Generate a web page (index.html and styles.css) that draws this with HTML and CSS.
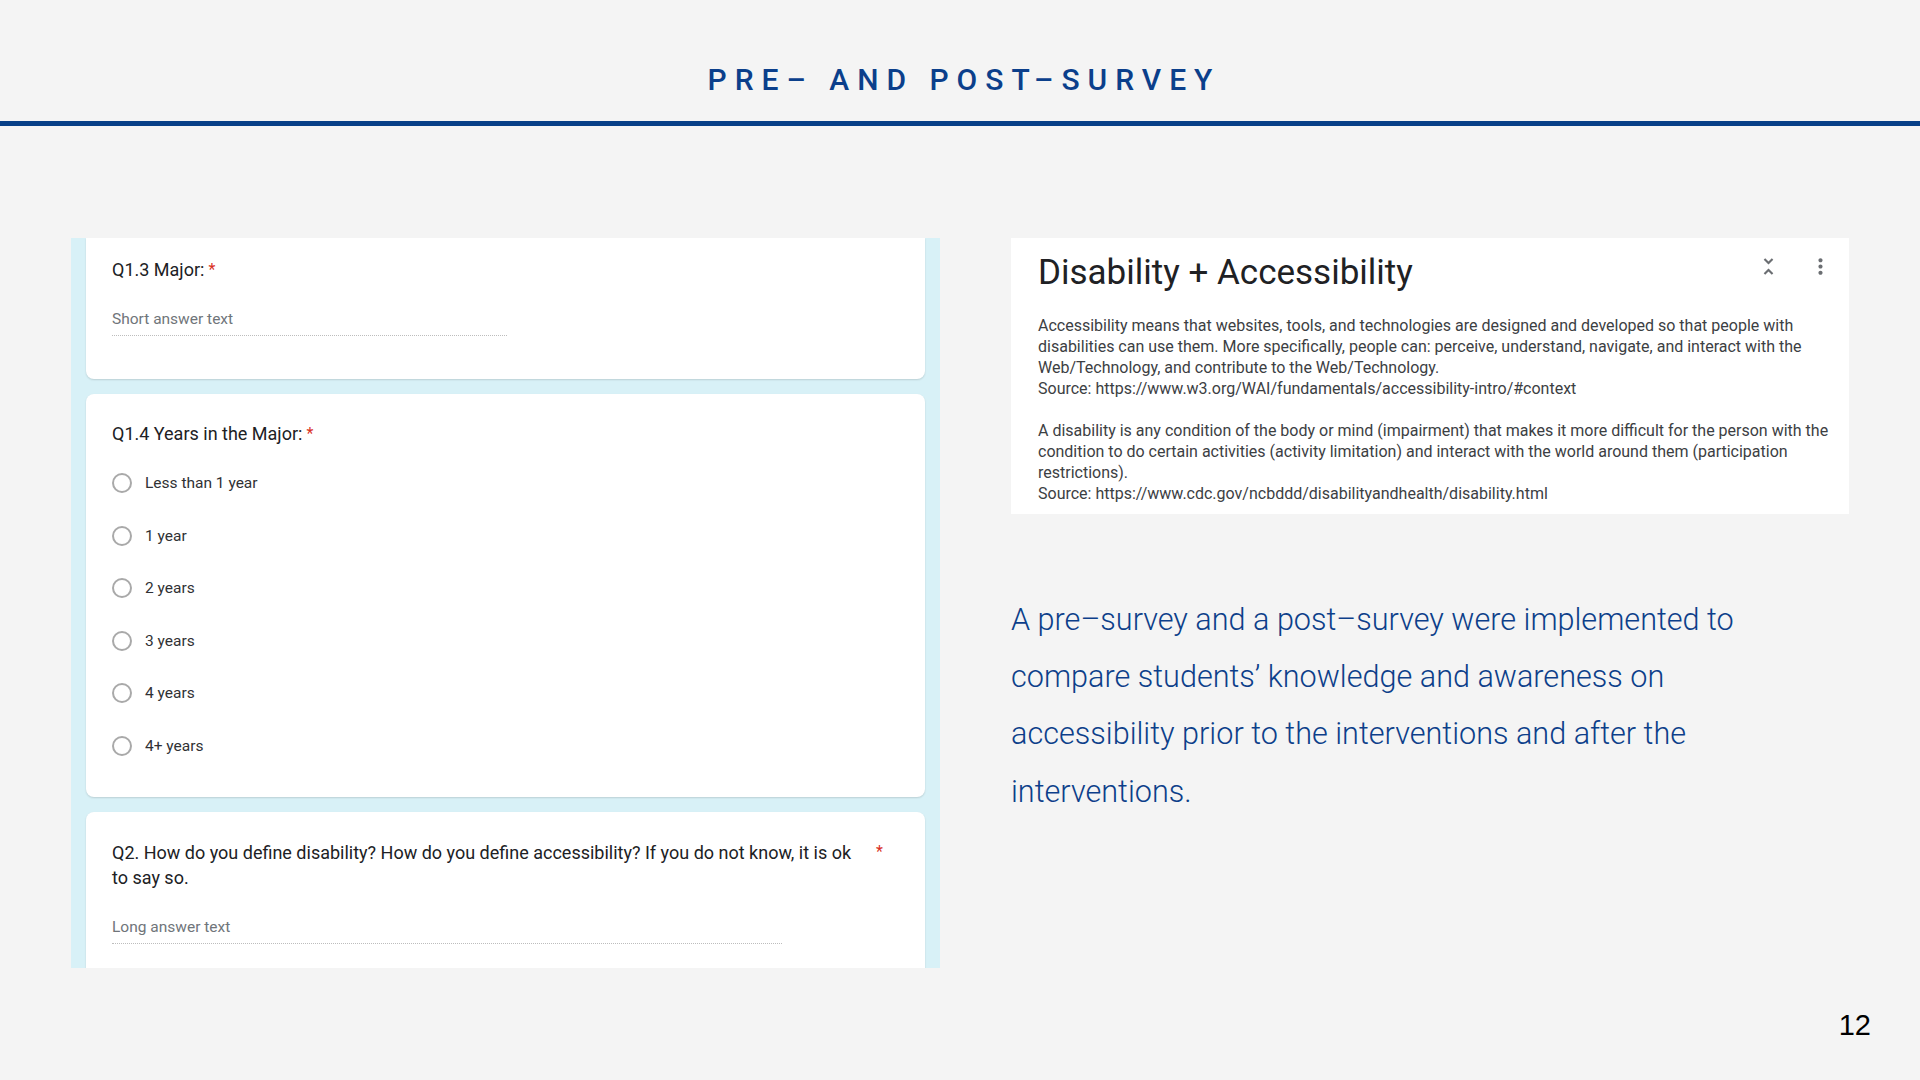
FILE: index.html
```html
<!DOCTYPE html>
<html lang="en">
<head>
<meta charset="utf-8">
<title>Pre- and Post-Survey</title>
<link rel="stylesheet" href="styles.css">
</head>
<body>
<header class="slide-header">
  <h1 class="slide-title">PRE– AND POST–SURVEY</h1>
</header>
<main class="slide-body">
  <section class="form-panel">
    <div class="form-card card-first">
      <div class="question"><span class="q-text">Q1.3 Major:</span><span class="req">*</span></div>
      <div class="answer short">Short answer text</div>
    </div>
    <div class="form-card card-radio">
      <div class="question"><span class="q-text">Q1.4 Years in the Major:</span><span class="req">*</span></div>
      <ul class="options">
        <li class="option"><span class="radio"></span><span class="opt-label">Less than 1 year</span></li>
        <li class="option"><span class="radio"></span><span class="opt-label">1 year</span></li>
        <li class="option"><span class="radio"></span><span class="opt-label">2 years</span></li>
        <li class="option"><span class="radio"></span><span class="opt-label">3 years</span></li>
        <li class="option"><span class="radio"></span><span class="opt-label">4 years</span></li>
        <li class="option"><span class="radio"></span><span class="opt-label">4+ years</span></li>
      </ul>
    </div>
    <div class="form-card card-long">
      <div class="question wide"><span class="q-text long">Q2. How do you define disability? How do you define accessibility? If you do not know, it is ok<br>to say so.</span><span class="req">*</span></div>
      <div class="answer long-answer">Long answer text</div>
    </div>
  </section>
  <section class="right-col">
    <div class="info-card">
      <div class="info-head">
        <h2 class="info-title">Disability + Accessibility</h2>
        <div class="info-icons">
          <svg class="icon" viewBox="0 0 24 24" width="25" height="25"><path fill="#6b6e72" d="M7.41 18.59L8.82 20 12 16.83 15.17 20l1.41-1.41L12 14l-4.590 4.59zm9.18-13.18L15.17 4 12 7.17 8.83 4 7.41 5.41 12 10l4.59-4.59z"/></svg>
          <svg class="icon" viewBox="0 0 24 24" width="25" height="25"><path fill="#6b6e72" d="M12 8c1.1 0 2-.9 2-2s-.9-2-2-2-2 .9-2 2 .9 2 2 2zm0 2c-1.1 0-2 .9-2 2s.9 2 2 2 2-.9 2-2-.9-2-2-2zm0 6c-1.1 0-2 .9-2 2s.9 2 2 2 2-.9 2-2-.9-2-2-2z"/></svg>
        </div>
      </div>
      <div class="info-text">
        <p>Accessibility means that websites, tools, and technologies are designed and developed so that people with<br>disabilities can use them. More specifically, people can: perceive, understand, navigate, and interact with the<br>Web/Technology, and contribute to the Web/Technology.<br>Source: https://www.w3.org/WAI/fundamentals/accessibility-intro/#context</p>
        <p>A disability is any condition of the body or mind (impairment) that makes it more difficult for the person with the<br>condition to do certain activities (activity limitation) and interact with the world around them (participation<br>restrictions).<br>Source: https://www.cdc.gov/ncbddd/disabilityandhealth/disability.html</p>
      </div>
    </div>
    <p class="summary">A pre–survey and a post–survey were implemented to<br>compare students’ knowledge and awareness on<br>accessibility prior to the interventions and after the<br>interventions.</p>
  </section>
</main>
<footer class="slide-footer"><span class="page-num">12</span></footer>
</body>
</html>
```
FILE: styles.css
```css
html, body {
  margin: 0;
  padding: 0;
}
body {
  width: 1920px;
  height: 1080px;
  overflow: hidden;
  background: #f4f4f4;
  font-family: Roboto, "Liberation Sans", sans-serif;
}

/* header */
.slide-header {
  height: 121px;
  border-bottom: 5px solid #073f87;
  display: flex;
  justify-content: center;
}
.slide-title {
  margin: 0 -8px 0 0;
  padding-top: 65px;
  font-family: Roboto, "Liberation Sans", sans-serif;
  font-weight: 500;
  font-size: 30px;
  line-height: 30px;
  letter-spacing: 8px;
  color: #0b3f8b;
}

/* main */
.slide-body {
  display: flex;
  gap: 71px;
  padding: 0 71px;
  margin-top: 112px;
  height: 730px;
}

/* form panel */
.form-panel {
  flex: none;
  width: 869px;
  box-sizing: border-box;
  padding: 0 15px;
  background: #d8f1f7;
  overflow: hidden;
  display: flex;
  flex-direction: column;
  gap: 15px;
}
.form-card {
  flex: none;
  background: #fff;
  border-radius: 8px;
  box-shadow: 0 1px 2px rgba(0, 0, 0, 0.14);
  padding: 0 26px;
  color: #202124;
}
.card-first {
  border-radius: 0 0 8px 8px;
  height: 141px;
  box-sizing: border-box;
  padding-top: 20px;
}
.card-radio {
  padding-top: 28px;
  padding-bottom: 25px;
}
.card-long {
  padding-top: 27.6px;
  padding-bottom: 40px;
}
.question {
  display: flex;
  align-items: flex-start;
  font-size: 18px;
  line-height: 24px;
}
.question.wide .q-text {
  width: 760px;
  line-height: 25.4px;
}
.req {
  color: #d93025;
  margin-left: 4px;
  font-size: 16px;
}
.answer {
  font-size: 15.5px;
  line-height: 20px;
  color: #70757a;
  padding-bottom: 6px;
  border-bottom: 1px dotted #bdbdbd;
}
.short {
  width: 395px;
  margin-top: 27px;
}
.long-answer {
  width: 670px;
  margin-top: 26.3px;
}
.options {
  list-style: none;
  margin: 10.7px 0 0;
  padding: 0;
}
.option {
  display: flex;
  align-items: center;
  height: 52.6px;
  gap: 13px;
}
.radio {
  width: 20px;
  height: 20px;
  box-sizing: border-box;
  border: 2px solid #a9a9a9;
  border-radius: 50%;
  flex: none;
}
.opt-label {
  font-size: 15.5px;
  color: #303134;
}

/* right column */
.right-col {
  flex: none;
  width: 838px;
  display: flex;
  flex-direction: column;
}
.info-card {
  background: #fff;
  padding: 14px 16.5px 10px 27px;
}
.info-head {
  display: flex;
  justify-content: space-between;
  align-items: flex-start;
}
.info-title {
  margin: 0;
  font-weight: 400;
  font-size: 35px;
  line-height: 42px;
  color: #202124;
}
.info-icons {
  display: flex;
  gap: 27px;
  margin-top: 1.5px;
}
.icon {
  display: block;
}
.info-text {
  margin-top: 21px;
  font-size: 16px;
  line-height: 21px;
  color: #3c4043;
  white-space: nowrap;
}
.info-text p {
  margin: 0;
}
.info-text p + p {
  margin-top: 21px;
}
.summary {
  margin: 77px 0 0;
  font-weight: 300;
  font-size: 30.6px;
  line-height: 57.2px;
  color: #0d3f8a;
  white-space: nowrap;
}

/* footer */
.slide-footer {
  display: flex;
  justify-content: flex-end;
  padding-right: 49px;
  margin-top: 42.5px;
}
.page-num {
  font-family: "Liberation Sans", sans-serif;
  font-size: 29px;
  line-height: 29px;
  color: #000;
}
```
